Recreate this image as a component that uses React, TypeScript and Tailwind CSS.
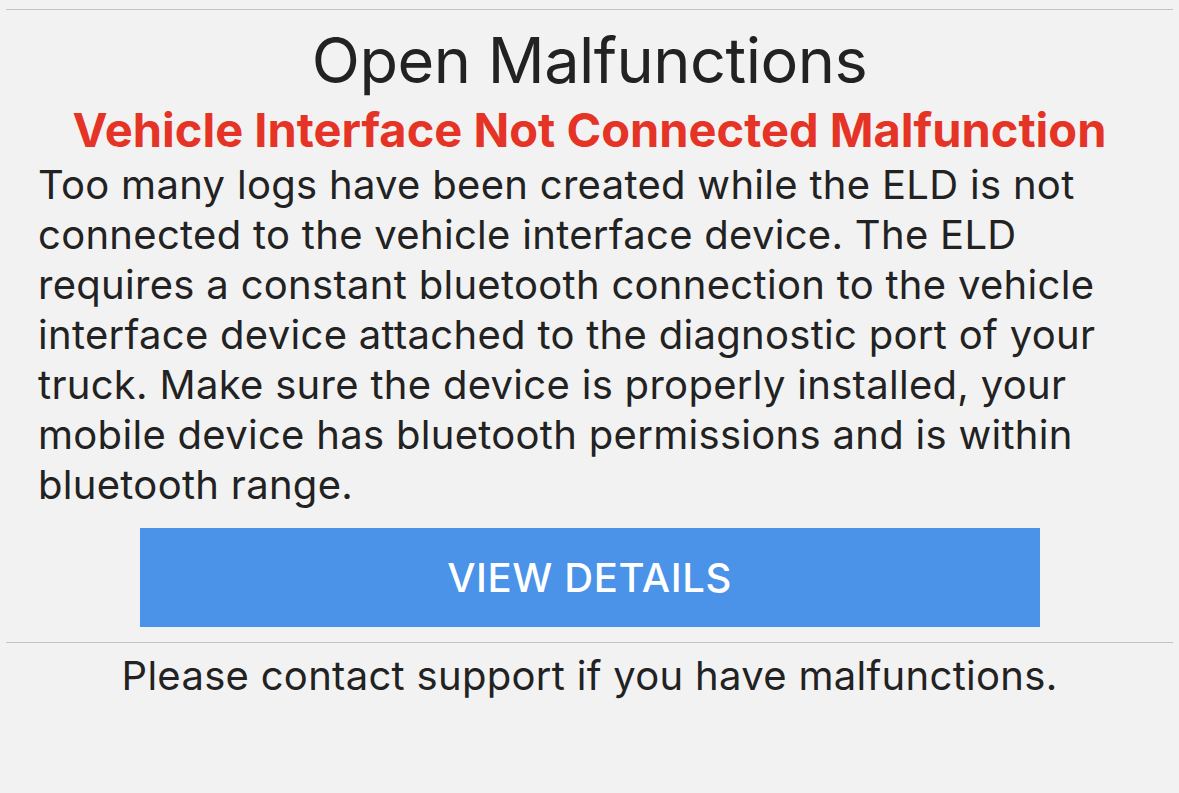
export default function App() {
  return (
    <div className="min-h-[793px] w-full bg-[#f2f2f2] px-[6px] pt-[9px] font-['Inter','Noto_Sans',sans-serif] text-[#222222]">
      <div className="border-t border-[#c4c4c4]" />
      <h1 className="mt-[14px] text-center text-[63px] leading-[72px] font-normal tracking-[-0.5px]">
        Open Malfunctions
      </h1>
      <h2 className="mt-[8px] text-center text-[47px] leading-[52px] font-bold text-[#e53326]">
        Vehicle Interface Not Connected Malfunction
      </h2>
      <p className="mt-[4px] px-[32px] text-[40px] leading-[50px] tracking-[0.3px]">
        Too many logs have been created while the ELD is not connected to the vehicle interface device. The ELD
        requires a constant bluetooth connection to the vehicle interface device attached to the diagnostic port of
        your truck. Make sure the device is properly installed, your mobile device has bluetooth permissions and is
        within bluetooth range.
      </p>
      <div className="mt-[18px] flex justify-center">
        <button className="flex h-[99px] w-[900px] items-center justify-center bg-[#4a93e8] text-[40px] font-medium tracking-[0.6px] text-white">
          VIEW DETAILS
        </button>
      </div>
      <div className="mt-[15px] border-t border-[#c4c4c4]" />
      <p className="mt-[8px] text-center text-[40px] leading-[50px] tracking-[0.3px]">
        Please contact support if you have malfunctions.
      </p>
    </div>
  );
}
